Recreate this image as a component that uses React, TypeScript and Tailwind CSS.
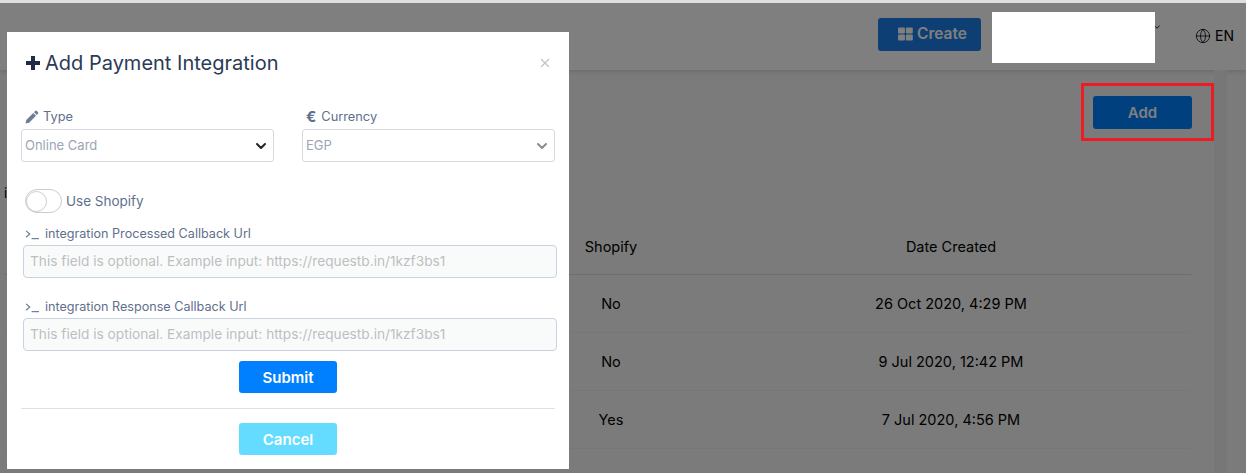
import React from "react";
import { Globe, ChevronDown, X } from "lucide-react";

const FONT = { fontFamily: "Inter, 'Open Sans', sans-serif" };

const rows = [
  { shopify: "No", date: "26 Oct 2020, 4:29 PM" },
  { shopify: "No", date: "9 Jul 2020, 12:42 PM" },
  { shopify: "Yes", date: "7 Jul 2020, 4:56 PM" },
];

const PencilIcon = () => (
  <svg viewBox="0 0 16 16" className="w-[14px] h-[14px] fill-[#6b7d99]">
    <path d="M11.6 1.2a1.4 1.4 0 0 1 2 0l1.2 1.2a1.4 1.4 0 0 1 0 2L13.5 5.7l-3.2-3.2zM9.4 3.4l3.2 3.2-7.9 7.9L.6 15.4l.9-4.1z" />
  </svg>
);

const PromptIcon = () => (
  <svg viewBox="0 0 16 12" className="w-[15px] h-[11px] fill-none stroke-[#6b7d99] stroke-[1.3]">
    <path d="M1 2l4 3.5L1 9" />
    <path d="M7 10.5h8" />
  </svg>
);

const UrlField = ({ label }: { label: string }) => (
  <div className="mx-[2px]">
    <div className="flex items-center gap-[5px] h-[20px] ml-[2px] text-[12.6px] text-[#5f6f8c]">
      <PromptIcon />
      <span>{label}</span>
    </div>
    <div className="mt-[1px] h-[33px] w-[534px] flex items-center px-[6px] rounded-[4px] border border-[#c8d3df] bg-[#f9fbfb] text-[13.7px] text-[#bcbfc2]">
      This field is optional. Example input: https://requestb.in/1kzf3bs1
    </div>
  </div>
);

const App = () => {
  return (
    <div className="relative w-[1246px] h-[473px] overflow-hidden bg-[#f6f6f6]" style={FONT}>
      {/* page behind the modal */}
      <div className="h-[70px] bg-white shadow-[0_2px_4px_rgba(0,0,0,0.12)] flex justify-end items-center pr-[12px]">
        <button className="flex items-center justify-center gap-[4px] w-[103px] h-[33px] mb-[2px] pl-[6px] rounded-[3px] bg-[#1a7fe8] text-white text-[15.5px] font-semibold">
          <svg viewBox="0 0 16 14" className="w-[15px] h-[14px] fill-white">
            <rect x="0" y="0" width="7.4" height="6.4" rx="1" />
            <rect x="8.4" y="0" width="7.4" height="6.4" rx="1" />
            <rect x="0" y="7.4" width="7.4" height="6.4" rx="1" />
            <rect x="8.4" y="7.4" width="7.4" height="6.4" rx="1" />
          </svg>
          Create
        </button>
        <ChevronDown className="w-[10px] h-[10px] ml-[171px] mb-[16px] text-black" strokeWidth={2} />
        <div className="flex items-center gap-[4px] ml-[33px] text-[14px] text-black">
          <Globe className="w-[16px] h-[16px] mt-[2px]" strokeWidth={1.2} />
          <span>EN</span>
        </div>
      </div>

      <div className="flex h-[403px]">
        <div className="w-[1214px] pl-[4px] pr-[23px]">
          <div className="flex justify-end pt-[26px]">
            <button className="w-[99px] h-[33px] mr-[-1px] rounded-[3px] bg-[#0080ff] text-white text-[15px] font-semibold">
              <span className="relative top-[1px]">Add</span>
            </button>
          </div>
          <div className="mt-[58px] h-[13px] text-[13px] text-black leading-none">i</div>
          <div className="flex h-[55px] items-center mt-[20px] text-[14.5px] text-black border-b border-[#dcdcdc]">
            <div className="w-[569px]" />
            <div className="w-[76px] text-center">Shopify</div>
            <div className="flex-1 text-center pl-[62px]">Date Created</div>
          </div>
          {rows.map((row) => (
            <div key={row.date} className="flex h-[58px] items-center text-[14.5px] text-black border-b border-[#eeeeee]">
              <div className="w-[569px]" />
              <div className="w-[76px] text-center">{row.shopify}</div>
              <div className="flex-1 text-center pl-[62px]">{row.date}</div>
            </div>
          ))}
        </div>
        <div className="w-[13px] bg-[#eeeeee]" />
      </div>

      {/* backdrop */}
      <div className="absolute inset-0 bg-black/50" />
      <div className="absolute inset-x-0 top-0 h-[3px] bg-[#dedede]" />

      {/* redacted area + annotation from the screenshot */}
      <div className="absolute left-[992px] top-[12px] w-[163px] h-[51px] bg-white" />
      <div className="absolute left-[1081px] top-[83px] w-[133px] h-[58px] border-[3px] border-[#ed1c24]" />

      {/* modal */}
      <div className="absolute left-[7px] top-[32px] w-[562px] h-[437px] bg-white pl-[14px] pt-[19px]">
        <div className="relative flex items-center gap-[4px] h-[24px] ml-[4px] text-[20px] text-[#2b3a55]">
          <svg viewBox="0 0 16 16" className="w-[16px] h-[16px] fill-[#1f2d47]">
            <path d="M6 1h4v5h5v4h-5v5H6v-5H1V6h5z" />
          </svg>
          <span>Add Payment Integration</span>
          <X className="absolute left-[513px] top-[5px] w-[14px] h-[14px] text-[#c4c4c4]" strokeWidth={2.4} />
        </div>

        <div className="flex gap-[28px] mt-[32px]">
          <div className="w-[253px]">
            <div className="flex items-center gap-[4px] h-[20px] ml-[4px] text-[12.8px] text-[#5f6f8c]">
              <PencilIcon />
              <span>Type</span>
            </div>
            <div className="flex items-center justify-between mt-[2px] h-[33px] px-[3px] pr-[4px] rounded-[3px] border border-[#d8d8e0] text-[13px] text-[#9aa5b5]">
              <span>Online Card</span>
              <ChevronDown className="w-[16px] h-[16px] text-[#222222]" strokeWidth={3} />
            </div>
          </div>
          <div className="w-[253px]">
            <div className="flex items-center gap-[5px] h-[20px] ml-[4px] text-[12.8px] text-[#5f6f8c]">
              <span className="font-bold text-[15px] text-[#5f6f8c]">€</span>
              <span>Currency</span>
            </div>
            <div className="flex items-center justify-between mt-[2px] h-[33px] px-[3px] pr-[4px] rounded-[3px] border border-[#d8d8e0] text-[13px] text-[#9aa5b5]">
              <span>EGP</span>
              <ChevronDown className="w-[16px] h-[16px] text-[#8a8a92]" strokeWidth={3} />
            </div>
          </div>
        </div>

        <div className="flex items-center gap-[4px] h-[26px] mt-[26px] ml-[4px] text-[13.5px] text-[#5f6f8c]">
          <div className="w-[37px] h-[24px] rounded-full border border-[#c9ccd2] bg-white flex items-center">
            <div className="w-[21px] h-[21px] rounded-full bg-white border border-[#c9ccd2]" />
          </div>
          <span>Use Shopify</span>
        </div>

        <div className="mt-[10px]">
          <UrlField label="integration Processed Callback Url" />
        </div>
        <div className="mt-[19px]">
          <UrlField label="integration Response Callback Url" />
        </div>

        <div className="flex justify-center w-[534px] mt-[10px]">
          <button className="w-[98px] h-[32px] pt-[2px] rounded-[3px] bg-[#0080ff] text-white text-[15px] font-semibold">
            Submit
          </button>
        </div>
        <div className="w-[534px] mt-[15px] border-t border-[#dee2e8]" />
        <div className="flex justify-center w-[534px] mt-[14px]">
          <button className="w-[98px] h-[32px] pt-[3px] rounded-[3px] bg-[#63dcff] text-white text-[15px] font-semibold">
            Cancel
          </button>
        </div>
      </div>
    </div>
  );
};

export default App;
